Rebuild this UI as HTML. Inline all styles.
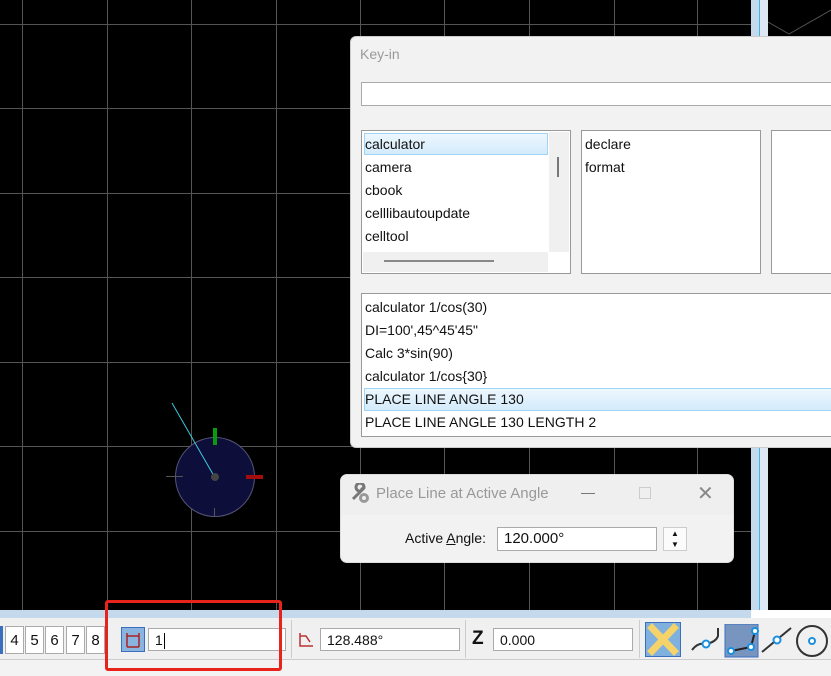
<!DOCTYPE html>
<html><head><meta charset="utf-8"><style>
*{box-sizing:border-box;margin:0;padding:0}
body{width:831px;height:676px;overflow:hidden;background:#000;position:relative;font-family:"Liberation Sans","DejaVu Sans",sans-serif;font-size:14px;color:#111}
.a{position:absolute}
.li{position:absolute;left:2px;height:22px;line-height:22px;padding-left:1px;white-space:nowrap}
.btn{position:absolute;top:626px;height:28px;width:19px;background:#fff;border:1px solid #aaa;text-align:center;line-height:28px;font-size:15px}
.inp{position:absolute;background:#fff;border:1px solid #aaa;height:24px;line-height:22px;padding-left:6px;font-size:14px}
</style></head><body>
<svg class="a" style="left:0;top:0" width="831" height="676">
<g stroke="#555" stroke-width="1">
<line x1="22.5" y1="0" x2="22.5" y2="610"/><line x1="107.5" y1="0" x2="107.5" y2="610"/><line x1="191.5" y1="0" x2="191.5" y2="610"/><line x1="276.5" y1="0" x2="276.5" y2="610"/><line x1="360.5" y1="0" x2="360.5" y2="610"/><line x1="444.5" y1="0" x2="444.5" y2="610"/><line x1="529.5" y1="0" x2="529.5" y2="610"/><line x1="614.5" y1="0" x2="614.5" y2="610"/><line x1="697.5" y1="0" x2="697.5" y2="610"/>
<line x1="0" y1="24.5" x2="751" y2="24.5"/><line x1="0" y1="108.5" x2="751" y2="108.5"/><line x1="0" y1="193.5" x2="751" y2="193.5"/><line x1="0" y1="277.5" x2="751" y2="277.5"/><line x1="0" y1="362.5" x2="751" y2="362.5"/><line x1="0" y1="446.5" x2="751" y2="446.5"/><line x1="0" y1="531.5" x2="751" y2="531.5"/>
<line x1="768" y1="22" x2="789" y2="34"/><line x1="789" y1="34" x2="831" y2="10"/>
</g>
<circle cx="215" cy="477" r="39.5" fill="#0e0e3a" stroke="#55557a"/>
<line x1="166" y1="476.5" x2="183" y2="476.5" stroke="#555"/><line x1="214.5" y1="508" x2="214.5" y2="516" stroke="#555"/>
<line x1="172" y1="403" x2="214" y2="476" stroke="#3cc8e0"/>
<circle cx="215" cy="477" r="4" fill="#444"/>
<rect x="213" y="428" width="4" height="17" fill="#0a9a10"/>
<rect x="246" y="475" width="17" height="4" fill="#a50d0d"/>
</svg>
<div class="a" style="left:751px;top:0;width:9px;height:610px;background:#c5d9ec;border-right:1px solid #3ab8e8"></div>
<div class="a" style="left:760px;top:0;width:8px;height:610px;background:#dde8f3"></div>

<div class="a" style="left:350px;top:36px;width:490px;height:412px;background:#f2f2f2;border:1px solid #ccc;border-radius:6px 0 0 6px">
<div class="a" style="left:9px;top:9px;color:#999;font-size:14px">Key-in</div>
<div class="a" style="left:10px;top:45px;width:480px;height:24px;background:#fff;border:1px solid #aaa"></div>
<div class="a" style="left:10px;top:93px;width:210px;height:144px;background:#fff;border:1px solid #999;overflow:hidden">
 <div class="a" style="left:2px;top:2px;width:184px;height:22px;background:linear-gradient(#eef7fe,#d3ebfb);border:1px solid #9fd4f5"></div>
 <div class="li" style="top:2px">calculator</div><div class="li" style="top:25px">camera</div><div class="li" style="top:48px">cbook</div><div class="li" style="top:71px">celllibautoupdate</div><div class="li" style="top:94px">celltool</div>
 <div class="a" style="left:187px;top:1px;width:20px;height:120px;background:#f0f0f0"></div>
 <div class="a" style="left:195px;top:26px;width:2px;height:20px;background:#777"></div>
 <div class="a" style="left:1px;top:121px;width:185px;height:20px;background:#f0f0f0"></div>
 <div class="a" style="left:22px;top:129px;width:110px;height:2px;background:#888"></div>
</div>
<div class="a" style="left:230px;top:93px;width:180px;height:144px;background:#fff;border:1px solid #999">
 <div class="li" style="top:2px">declare</div><div class="li" style="top:25px">format</div></div>
<div class="a" style="left:420px;top:93px;width:80px;height:144px;background:#fff;border:1px solid #999"></div>
<div class="a" style="left:10px;top:256px;width:480px;height:144px;background:#fff;border:1px solid #999">
 <div class="a" style="left:2px;top:94px;width:478px;height:23px;background:linear-gradient(#eef7fe,#d3ebfb);border:1px solid #9fd4f5"></div>
 <div class="li" style="top:2px">calculator 1/cos(30)</div><div class="li" style="top:25px">DI=100',45^45'45"</div><div class="li" style="top:48px">Calc 3*sin(90)</div><div class="li" style="top:71px">calculator 1/cos{30}</div><div class="li" style="top:94px">PLACE LINE ANGLE 130</div><div class="li" style="top:117px">PLACE LINE ANGLE 130 LENGTH 2</div>
</div>
</div>

<div class="a" style="left:340px;top:474px;width:394px;height:89px;background:#f2f2f2;border:1px solid #ddd;border-radius:7px;overflow:hidden">
<div class="a" style="left:0;top:0;width:394px;height:40px;background:#efefef"></div>
<svg class="a" style="left:8px;top:8px" width="22" height="22" viewBox="0 0 22 22"><path d="M4 16 L12 8 A4 4 0 1 1 15 4 L12 7" stroke="#777" stroke-width="3" fill="none"/><circle cx="15" cy="15" r="5" fill="#999"/><circle cx="15" cy="15" r="2" fill="#eee"/></svg>
<div class="a" style="left:35px;top:10px;color:#999;font-size:15px">Place Line at Active Angle</div>
<div class="a" style="left:240px;top:18px;width:14px;height:1px;background:#777"></div>
<div class="a" style="left:298px;top:12px;width:12px;height:12px;border:1px solid #ccc"></div>
<div class="a" style="left:356px;top:6px;color:#888;font-size:20px">✕</div>
<div class="a" style="left:64px;top:55px;font-size:14px">Active <u>A</u>ngle:</div>
<div class="inp" style="left:156px;top:52px;width:160px;font-size:15px">120.000°</div>
<div class="a" style="left:322px;top:52px;width:24px;height:24px;background:#fbfbfb;border:1px solid #ccc;font-size:8px;text-align:center;line-height:11px">▲<br>▼</div>
</div>

<div class="a" style="left:0;top:610px;width:751px;height:8px;background:#c5d9ec"></div>
<div class="a" style="left:751px;top:610px;width:80px;height:8px;background:#fff"></div>
<div class="a" style="left:0;top:618px;width:831px;height:42px;background:#f0f0f0;border-bottom:1px solid #ccc"></div>
<div class="a" style="left:0;top:660px;width:831px;height:16px;background:#f3f3f3"></div>
<div class="a" style="left:0;top:626px;width:3px;height:28px;background:#3a6fc0"></div>
<div class="btn" style="left:5px">4</div><div class="btn" style="left:25px">5</div><div class="btn" style="left:45px">6</div><div class="btn" style="left:66px">7</div><div class="btn" style="left:86px">8</div>
<div class="a" style="left:121px;top:627px;width:24px;height:25px;background:#8ab4e0;border:1px solid #3a6fc0"><svg width="22" height="23"><path d="M5 5v14M17 5v14M5 8h12M5 19h12" stroke="#a22" stroke-width="1.5" fill="none"/></svg></div>
<div class="inp" style="left:148px;top:628px;width:138px;height:23px">1<span style="display:inline-block;width:1px;height:16px;background:#000;vertical-align:middle;margin-left:1px"></span></div>
<div class="a" style="left:291px;top:620px;width:1px;height:38px;background:#ccc"></div>
<svg class="a" style="left:297px;top:630px" width="18" height="18"><path d="M3 3v13h13M3 6h6l4 6" stroke="#b33" stroke-width="1.5" fill="none"/></svg>
<div class="inp" style="left:320px;top:628px;width:140px;height:23px">128.488°</div>
<div class="a" style="left:465px;top:620px;width:1px;height:38px;background:#ccc"></div>
<div class="a" style="left:472px;top:628px;font-weight:bold;font-size:19px">Z</div>
<div class="inp" style="left:493px;top:628px;width:140px;height:23px">0.000</div>
<div class="a" style="left:639px;top:620px;width:1px;height:38px;background:#ccc"></div>
<div class="a" style="left:645px;top:622px;width:36px;height:35px;background:#7fb0de;border:1px solid #3a6fc0"><svg width="34" height="33"><path d="M6 5L28 28M28 5L6 28" stroke="#f5d36a" stroke-width="7" stroke-linecap="square"/></svg></div>
<svg class="a" style="left:690px;top:624px" width="140" height="34">
<path d="M2 26 Q8 18 16 20 M16 20 Q26 18 28 12 V4" stroke="#333" stroke-width="2" fill="none"/><circle cx="16" cy="20" r="3.5" fill="#fff" stroke="#1a8fe0" stroke-width="2"/>
<rect x="35" y="0" width="33" height="33" fill="#7895c0" stroke="#3a6fc0"/><path d="M41 27l20-4 4-16" stroke="#222" stroke-width="2" fill="none"/><circle cx="41" cy="27" r="3" fill="#fff" stroke="#1a8fe0" stroke-width="2"/><circle cx="61" cy="23" r="3" fill="#fff" stroke="#1a8fe0" stroke-width="2"/><circle cx="65" cy="7" r="3" fill="#fff" stroke="#1a8fe0" stroke-width="2"/>
<path d="M72 28 L101 4" stroke="#333" stroke-width="2"/><circle cx="87" cy="16" r="3.5" fill="#fff" stroke="#1a8fe0" stroke-width="2"/>
<circle cx="122" cy="17" r="15" fill="none" stroke="#333" stroke-width="2"/><circle cx="122" cy="17" r="3" fill="#fff" stroke="#1a8fe0" stroke-width="2"/>
</svg>
<div class="a" style="left:105px;top:600px;width:177px;height:71px;border:3px solid #e8231b;border-radius:3px"></div>
</body></html>
